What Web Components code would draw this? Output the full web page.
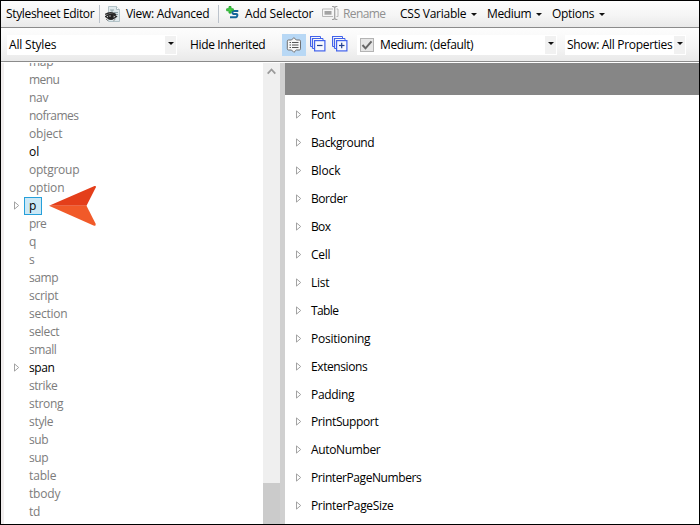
<!DOCTYPE html>
<html lang="en">
<head>
<meta charset="utf-8">
<title>Stylesheet Editor</title>
<style>
html,body{margin:0;height:100%;overflow:hidden}
body{font:12px/18px "Open Sans","Noto Sans",sans-serif;color:#000}
</style>
</head>
<body>
<stylesheet-editor></stylesheet-editor>
<script>
const define = (name, html, setup) => customElements.define(name, class extends HTMLElement {
  connectedCallback() {
    if (this.shadowRoot) return;
    const t = document.createElement('template');
    t.innerHTML = html;
    this.attachShadow({mode: 'open'}).append(t.content.cloneNode(true));
    if (setup) setup(this, this.shadowRoot);
  }
});

// Text label whose letter spacing is adjusted to fill the width given by w.
const ctx = document.createElement('canvas').getContext('2d');
define('ui-label', `<style>:host{display:block;flex:none;white-space:pre}</style><span></span>`, (el, root) => {
  const text = el.getAttribute('text'), w = +el.getAttribute('w');
  ctx.font = '12px "Open Sans"';
  const span = root.querySelector('span');
  span.textContent = text;
  span.style.letterSpacing = ((w + .3 - ctx.measureText(text).width) / text.length).toFixed(3) + 'px';
  el.style.width = w + 'px';
});

define('ui-caret', `<style>:host{display:block;flex:none;width:0;height:0;border:3px solid transparent;border-top-color:#111;border-bottom:0}</style>`);

define('ui-separator', `<style>:host{display:block;flex:none;width:1px;height:18px;background:#bcc3cc}</style>`);

define('ui-expander', `<style>:host{display:block;flex:none;width:6px;height:9px}svg{display:block}</style>
<svg width="6" height="9"><path d="M.5 .9v7.2L4.7 4.5z" fill="#fff" stroke="#999" stroke-width=".9"/></svg>`);

define('tool-bar', `<style>
:host{display:flex;align-items:center;box-sizing:border-box;flex:none;background:linear-gradient(#fdfdfd,#f5f5f5 55%,#e9e9e9);border-bottom:1px solid #8b8b8b}
</style><slot></slot>`);

define('combo-box', `<style>
:host{display:flex;align-items:center;flex:none;height:20px;background:#fff}
.b{margin-left:auto;margin-right:1px;width:11px;height:18px;background:#f1f1f1;display:flex;justify-content:center;align-items:center}
ui-caret{margin-top:-3px}
</style><slot></slot><div class="b"><ui-caret></ui-caret></div>`);

const icons = {
  view: [15, 17, `<path d="M3.5 .5h8l3 3v12h-11z" fill="#dfe9ec" stroke="#b3c3c8"/><path d="M11.5 .5v3h3" fill="#fff" stroke="#a9babf"/><path d="M5 4h4M7 4v4M9 6.5h4M9 8.5h4" stroke="#8fa3a8"/><path d="M.2 8.5Q5.5 5 11 8.6M.5 10.5Q5.5 6.5 11.5 10.5Q6 15.5 .5 10.5z" fill="#eee" stroke="#292929" stroke-width="1.3"/><circle cx="5.9" cy="10.9" r="2.9" fill="#222"/><circle cx="5" cy="10" r=".8" fill="#bbb"/><path d="M1 13l2 1.7M10.5 13l-2 1.7" stroke="#777"/>`],
  add: [14, 14, `<path d="M12.300 5H7.400Q6.300 5 6.300 6.200T7.500 8H10.300Q11.400 8 11.300 9.500T10 11.300H4" fill="none" stroke="#14659a" stroke-width="2.100"/><path d="M3 .5h2v2.300h2.300v2H5v2.300h-2V4.800H.700v-2h2.300z" fill="#45cf45" stroke="#20a52a" stroke-width=".9"/>`],
  rename: [17, 16, `<path d="M.5 4h10.5M.5 4v7.5H11M14.5 4h1.500v7.500h-1.500" fill="none" stroke="#b7b7b7"/><rect x="2.500" y="6" width="7" height="3.700" fill="#a3a3a3"/><path d="M10 1.500h1.500l1.200 1 1.200-1h1.500M12.700 2.500v11M10 14.500h1.500l1.200-1 1.200 1h1.500" fill="none" stroke="#9f9f9f" stroke-width="1.200"/>`],
  list: [16, 16, `<path d="M2.500 3h3l2.400-2.400L10.300 3h3q1.200 0 1.200 1.200v7.600q0 1.200-1.200 1.200h-3l-2.400 2.400L5.500 13h-3q-1.200 0-1.200-1.200V4.200Q1.300 3 2.500 3z" fill="#f7f7f7" stroke="#707070"/><path d="M3.500 5.500h1.500M3.500 8h1.500M3.500 10.500h1.500M6 5.500h6.500M6 8h6.500M6 10.500h6.500" stroke="#555"/>`],
  minus: [16, 16, `<path d="M.5 10.500V.5h10M2.500 12.500V2.500h10.500" fill="none" stroke="#4263eb" stroke-width="1.200"/><path d="M.5 10.500h2M2.500 12.500h2M10.500 .5v2M13 2.500v2" stroke="#4263eb"/><rect x="4.600" y="4.600" width="10.300" height="10.300" fill="#f8f9fe" stroke="#4263eb" stroke-width="1.200"/><path d="M7 9.500h5.500" stroke="#23408e" stroke-width="1.200"/>`]
};
icons.plus = [16, 16, icons.minus[2] + `<path d="M9.700 6.800v5.500" stroke="#23408e" stroke-width="1.200"/>`];
define('ui-icon', `<style>:host{display:block;flex:none}svg{display:block}</style><div></div>`, (el, root) => {
  const [w, h, d] = icons[el.getAttribute('name')];
  root.querySelector('div').innerHTML = `<svg width="${w}" height="${h}" fill="none">${d}</svg>`;
});

define('check-box', `<style>:host{display:block;flex:none;width:12px;height:12px;border:1px solid #b4b4b4;background:#e6e6e6}svg{display:block}</style>
<svg width="12" height="12"><path d="M1.500 6l3 3.300L10.500 2.300" fill="none" stroke="#666" stroke-width="2"/></svg>`);

define('selector-item', `<style>
:host{display:flex;align-items:center;height:18px;flex:none;color:#7c7c7c;padding-left:10px}
:host([used]){color:#000}
ui-expander{visibility:hidden;margin-bottom:2px}
:host([expandable]) ui-expander{visibility:visible}
.n{display:flex;align-items:center;box-sizing:border-box;height:18px;margin-left:4px;padding:0 5px 0 4px;border:1px solid transparent}
:host([selected]) .n{background:#cbe8f6;border-color:#26a0da;width:18px}
ui-label{margin-top:1px}
</style><ui-expander></ui-expander><div class="n"><slot></slot></div>`);

define('property-group', `<style>
:host{display:flex;align-items:center;height:27.960px;padding-left:11px;gap:9px}
ui-expander{margin-bottom:1px}
</style><ui-expander></ui-expander><slot></slot>`);

define('selector-list', `<style>
:host{display:flex;flex:none;width:279px;background:#fff;overflow:hidden}
.edge{width:3px;background:#f1eeee}
.rows{width:259px;height:100%;overflow:hidden}
.in{margin-top:-10px}
.bar{flex:1;background:#efefef;display:flex;flex-direction:column;align-items:center}
.bar svg{margin-top:5px}
.thumb{margin-top:auto;width:100%;height:41px;background:#cbcbcb}
</style><div class="edge"></div><div class="rows"><div class="in"><slot></slot></div></div>
<div class="bar"><svg width="9" height="7"><path d="M.7 5.700L4.500 1.500 8.300 5.700" fill="none" stroke="#9a9a9a" stroke-width="1.800"/></svg><div class="thumb"></div></div>`);

define('pointer-arrow', `<style>:host{position:absolute;left:47px;top:184px;width:49px;height:42px}svg{display:block}</style>
<svg width="49" height="42"><path d="M1 20.800L46.500 1Q49 .8 47.500 3L38.500 20.800z" fill="#e43e1a"/><path d="M1 20.800H38.500L47.500 38.500Q48.500 41.500 45.500 40.500z" fill="#f15a29"/></svg>`);

const selectors = [['map',24],['menu',30],['nav',19],['noframes',49],['object',33],['ol',10,'used'],['optgroup',50],['option',35],['p',7,'used selected expandable'],['pre',17],['q',7],['s',5],['samp',29],['script',29],['section',38],['select',30],['small',27],['span',25,'used expandable'],['strike',28],['strong',34],['style',24],['sub',19],['sup',19],['table',27],['tbody',31],['td',11]];
const groups = [['Font',24],['Background',63],['Block',29],['Border',36],['Box',19],['Cell',19],['List',18],['Table',27],['Positioning',59],['Extensions',56],['Padding',43],['PrintSupport',67],['AutoNumber',69],['PrinterPageNumbers',110],['PrinterPageSize',82]];
const label = (t, w, style = '') => `<ui-label text="${t}" w="${w}" style="${style}"></ui-label>`;

define('stylesheet-editor', `<style>
:host{display:flex;flex-direction:column;box-sizing:border-box;width:700px;height:525px;border:1px solid #000;background:#fff;position:relative;overflow:hidden}
.main{flex:1;min-height:0;display:flex;margin-top:1px}
.split{width:5px;background:#d0d0d0}
.props{flex:1;overflow:hidden}
.head{height:32px;background:#868686;margin-bottom:6px}
.on{width:24px;height:22px;margin-left:17px;background:#b8d8f5;display:flex;align-items:center;justify-content:center}
</style>
<tool-bar style="height:27px">
${label('Stylesheet Editor',88,'margin-left:5px')}<ui-separator style="margin-left:5px"></ui-separator>
<ui-icon name="view" style="margin-left:5px"></ui-icon>${label('View: Advanced',83,'margin-left:6px')}
<ui-separator style="margin-left:9px"></ui-separator><ui-icon name="add" style="margin-left:7px;margin-top:-2px"></ui-icon>
${label('Add Selector',68,'margin-left:5px')}<ui-icon name="rename" style="margin-left:9px;margin-top:-2px"></ui-icon>
${label('Rename',42,'margin-left:4px;color:#909090')}
${label('CSS Variable',66,'margin-left:15px')}<ui-caret style="margin-left:5px"></ui-caret>
${label('Medium',44,'margin-left:10px')}<ui-caret style="margin-left:5px"></ui-caret>
${label('Options',42,'margin-left:10px')}<ui-caret style="margin-left:5px"></ui-caret>
</tool-bar>
<tool-bar style="height:34px">
<combo-box style="width:170px;margin-left:6px">${label('All Styles',47,'margin-left:2px')}</combo-box>
${label('Hide Inherited',75,'margin-left:13px;margin-top:0')}
<div class="on"><ui-icon name="list"></ui-icon></div>
<ui-icon name="minus" style="margin-left:4px;margin-top:-2px"></ui-icon><ui-icon name="plus" style="margin-left:6px;margin-top:-2px"></ui-icon>
<combo-box style="width:200px;margin-left:9px"><check-box style="margin-left:3px"></check-box>${label('Medium: (default)',93,'margin-left:6px')}</combo-box>
<combo-box style="width:121px;margin-left:8px">${label('Show: All Properties',105,'margin-left:2px')}</combo-box>
</tool-bar>
<div class="main">
<selector-list>${selectors.map(([t,w,a='']) => `<selector-item ${a}>${label(t,w)}</selector-item>`).join('')}</selector-list>
<div class="split"></div>
<div class="props"><div class="head"></div>${groups.map(([t,w]) => `<property-group>${label(t,w)}</property-group>`).join('')}</div>
</div>
<pointer-arrow></pointer-arrow>`);
</script>
</body>
</html>
